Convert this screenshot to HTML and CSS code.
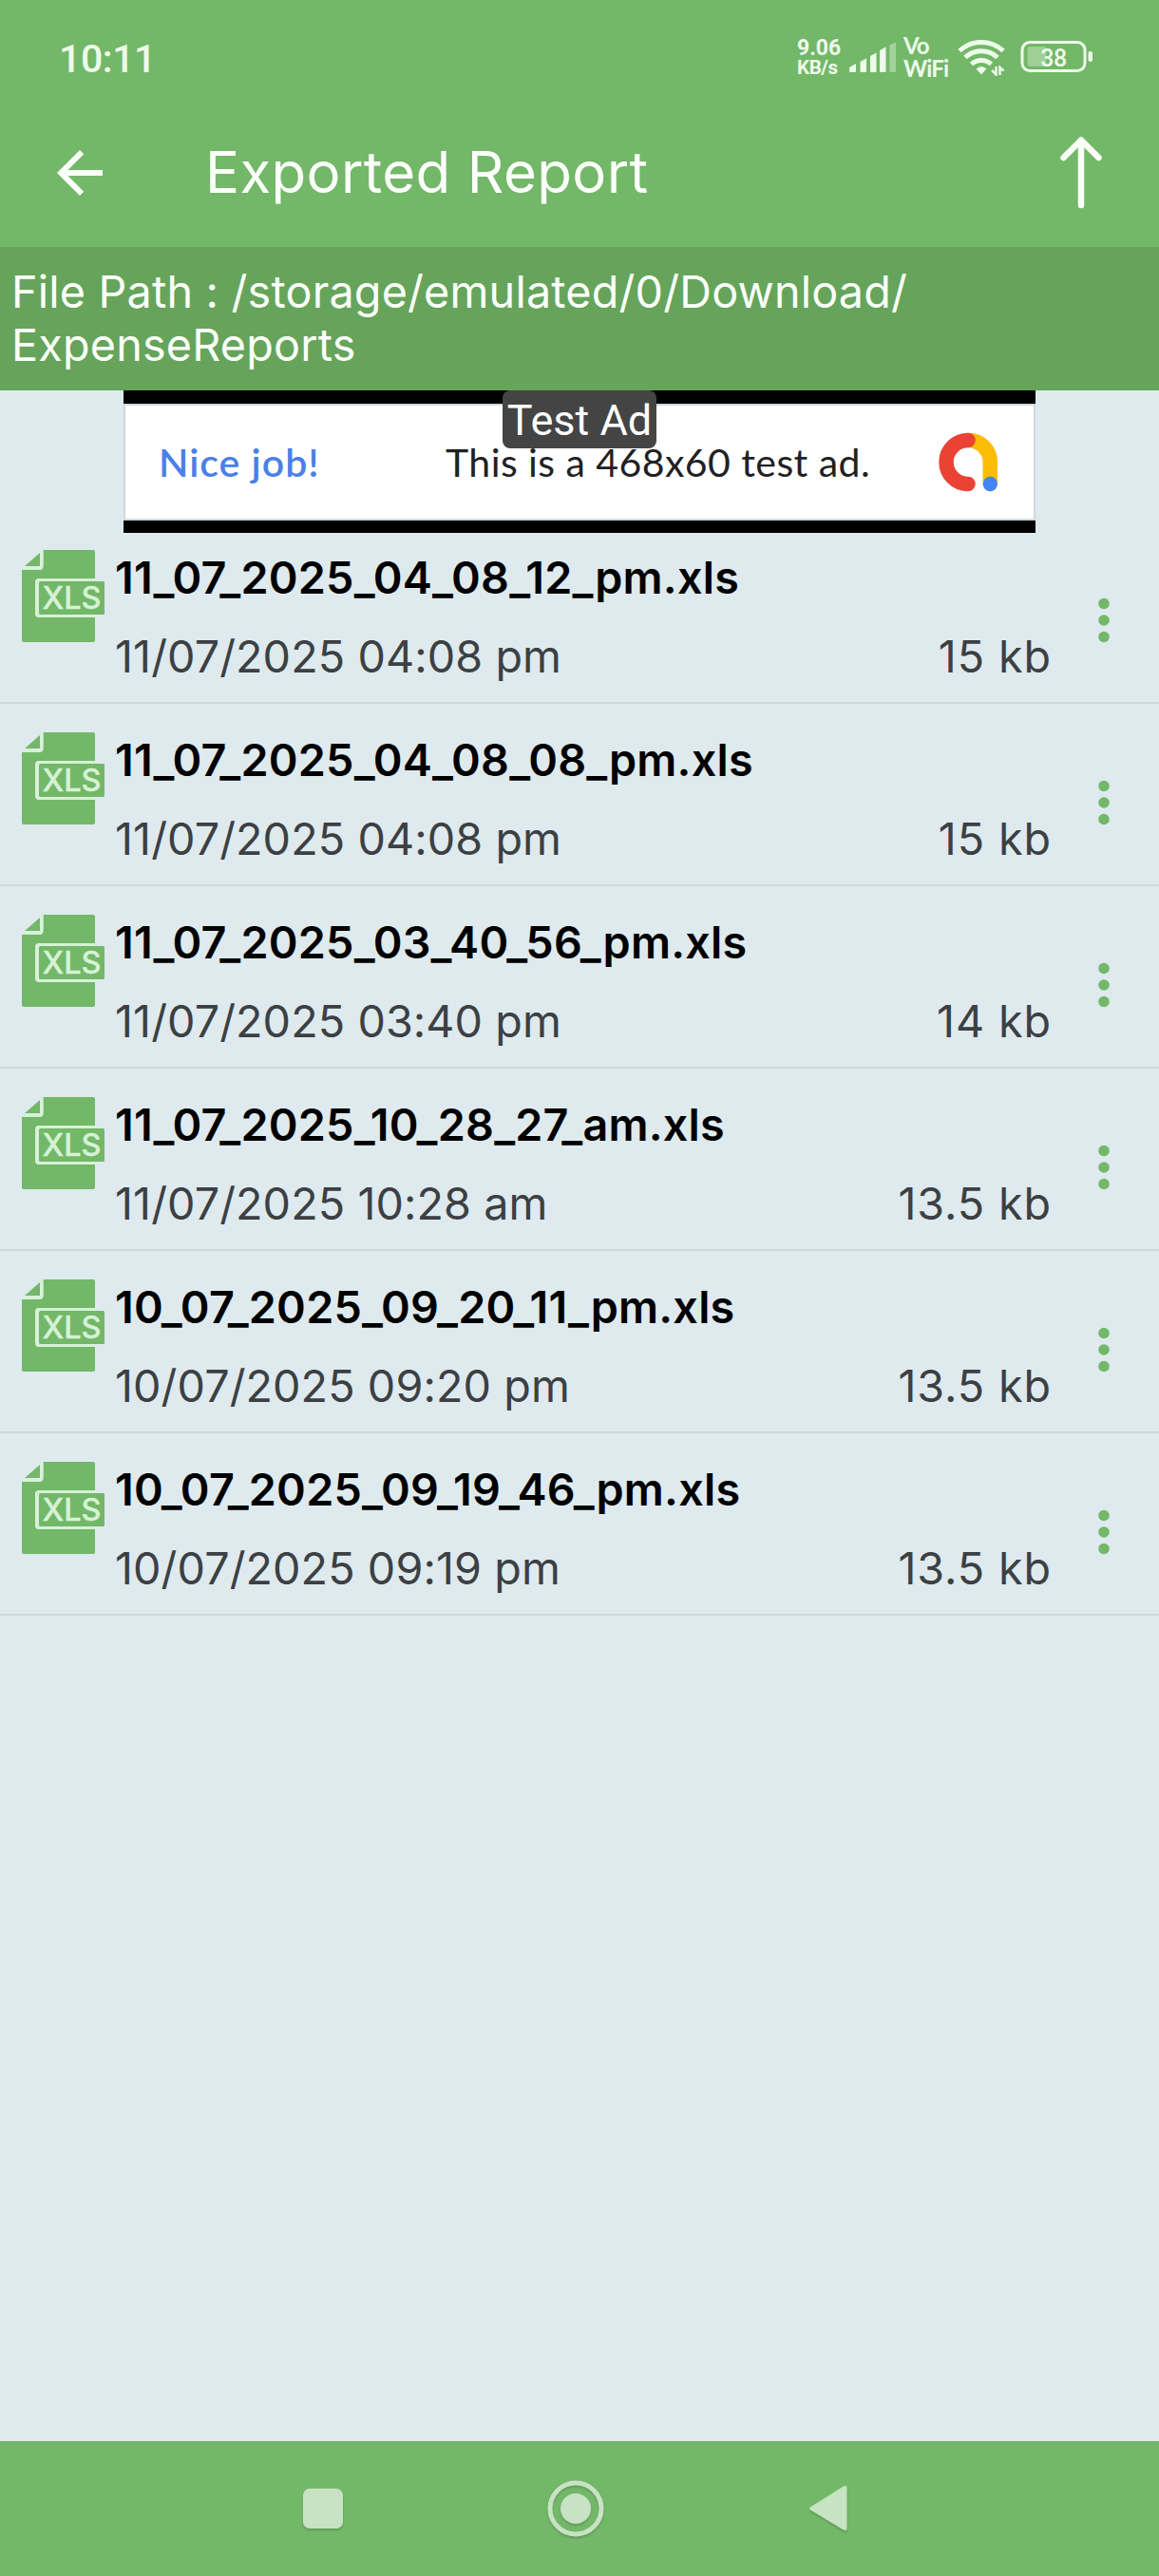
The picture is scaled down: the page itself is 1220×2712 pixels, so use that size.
FILE: index.html
```html
<!DOCTYPE html>
<html lang="en">
<head>
<meta charset="utf-8">
<title>Exported Report</title>
<link rel="stylesheet" href="styles.css">
</head>
<body>
<svg class="defs" width="0" height="0">
  <symbol id="xls" viewBox="0 0 88 98">
    <path d="M24 0H75Q77 0 77 2V30H18Q14 30 14 34V67Q14 71 18 71H77V95Q77 97 75 97H2Q0 97 0 95V21H18Q22.500 21 22.500 17V0ZM3 17 19 3V17Z" fill="#73b769"/>
    <rect x="18" y="33" width="69" height="35" rx="1.500" fill="#73b769"/>
    <path d="M77 31.500H19Q15.500 31.500 15.500 35V66Q15.500 69.500 19 69.500H77M1 19.500H18Q21 19.500 21 16.500V0" fill="none" stroke="#d6f2d5" stroke-width="3"/>
    <text x="21.500" y="62" textLength="62" lengthAdjust="spacingAndGlyphs" class="xls-text">XLS</text>
  </symbol>
  <symbol id="dots" viewBox="0 0 12 48">
    <g fill="#73b769"><circle cx="6" cy="6.500" r="5.800"/><circle cx="6" cy="24" r="5.800"/><circle cx="6" cy="41.500" r="5.800"/></g>
  </symbol>
</svg>
<div class="screen">
  <header class="status">
    <span class="clock">10:11</span>
    <span class="speed"><span>9.06</span><span class="unit">KB/s</span></span>
    <svg class="signal" width="50" height="34" viewBox="0 0 50 34" fill="#edfbe9">
      <path d="M0 27 7 23V31Q7 32 6 32H1.500Q0 32 0 30.500ZM11.500 21 18 17.500V31Q18 32 17 32H12.500Q11.500 32 11.500 31ZM22 15 28.500 11.500V31Q28.500 32 27.500 32H23Q22 32 22 31ZM32 9 38.500 5.500V31Q38.500 32 37.500 32H33Q32 32 32 31Z"/>
      <path opacity=".4" d="M42.500 3.500 49 .5V31Q49 32 48 32H43.500Q42.500 32 42.500 31Z"/>
    </svg>
    <span class="vowifi"><span>Vo</span><span>WiFi</span></span>
    <svg class="wifi" width="52" height="40" viewBox="0 0 52 40" fill="none" stroke="#edfbe9" stroke-width="5">
      <path d="M3 13.500A34 34 0 0 1 49 13.500M9 20.500A25 25 0 0 1 43 20.500M15.500 27.500A15.500 15.500 0 0 1 36.500 27.500"/>
      <path d="M20.500 32.500Q26 27.500 31.500 32.500L26 38.500Z" fill="#edfbe9" stroke="none"/>
      <path d="M41.500 30V38.500L37 34M45.500 39V31L49.500 34.500" stroke-width="2.500"/>
    </svg>
    <svg class="battery" width="78" height="36" viewBox="0 0 78 36">
      <rect x="4" y="2.500" width="66" height="30" rx="8" fill="none" stroke="#edfbe9" stroke-width="3"/>
      <rect x="9.500" y="7" width="20" height="21" rx="3" fill="#edfbe9" opacity=".35"/>
      <rect x="73.500" y="12" width="4.500" height="11" rx="2" fill="#edfbe9"/>
      <text x="23.200" y="28" textLength="28" class="battery-text">38</text>
    </svg>
  </header>
  <div class="appbar">
    <svg class="back" width="72" height="72" viewBox="0 0 24 24" fill="#fbfff9"><path d="M20 11H7.830l5.590-5.590L12 4l-8 8 8 8 1.410-1.410L7.830 13H20v-2z"/></svg>
    <h1>Exported Report</h1>
    <svg class="up" width="44" height="76" viewBox="0 0 44 76" fill="none" stroke="#fbfff9" stroke-width="6.500" stroke-linecap="round" stroke-linejoin="round"><path d="M22 72V4.500M3.500 22 22 3.500 40.500 22"/></svg>
  </div>
  <div class="path">File Path : /storage/emulated/0/Download/<br>ExpenseReports</div>
  <div class="ad">
    <div class="ad-body">
      <span class="nice">Nice job!</span>
      <span class="adtext">This is a 468x60 test ad.</span>
      <svg class="admob" width="64" height="64" viewBox="0 0 64 64" fill="none" stroke-width="15.500" stroke-linecap="round">
        <path d="M31 8.500A23 23 0 0 1 54.300 32V53" stroke="#fbbc04"/>
        <path d="M31 8.500A23 23 0 0 0 31 54.500" stroke="#ea4335"/>
        <circle cx="54.300" cy="54.500" r="7.700" fill="#4285f4"/>
      </svg>
    </div>
    <span class="badge">Test Ad</span>
  </div>
  <ul class="files">
    <li><svg class="icon"><use href="#xls"/></svg><div class="info"><b>11_07_2025_04_08_12_pm.xls</b><div class="meta"><span>11/07/2025 04:08 pm</span><span class="size">15 kb</span></div></div><svg class="more"><use href="#dots"/></svg></li>
    <li><svg class="icon"><use href="#xls"/></svg><div class="info"><b>11_07_2025_04_08_08_pm.xls</b><div class="meta"><span>11/07/2025 04:08 pm</span><span class="size">15 kb</span></div></div><svg class="more"><use href="#dots"/></svg></li>
    <li><svg class="icon"><use href="#xls"/></svg><div class="info"><b>11_07_2025_03_40_56_pm.xls</b><div class="meta"><span>11/07/2025 03:40 pm</span><span class="size">14 kb</span></div></div><svg class="more"><use href="#dots"/></svg></li>
    <li><svg class="icon"><use href="#xls"/></svg><div class="info"><b>11_07_2025_10_28_27_am.xls</b><div class="meta"><span>11/07/2025 10:28 am</span><span class="size">13.5 kb</span></div></div><svg class="more"><use href="#dots"/></svg></li>
    <li><svg class="icon"><use href="#xls"/></svg><div class="info"><b>10_07_2025_09_20_11_pm.xls</b><div class="meta"><span>10/07/2025 09:20 pm</span><span class="size">13.5 kb</span></div></div><svg class="more"><use href="#dots"/></svg></li>
    <li><svg class="icon"><use href="#xls"/></svg><div class="info"><b>10_07_2025_09_19_46_pm.xls</b><div class="meta"><span>10/07/2025 09:19 pm</span><span class="size">13.5 kb</span></div></div><svg class="more"><use href="#dots"/></svg></li>
  </ul>
  <nav class="nav">
    <svg width="44" height="46" viewBox="0 0 44 46"><rect x="1" y="1" width="42" height="42" rx="7"/></svg>
    <svg width="60" height="62" viewBox="0 0 60 62"><circle cx="30" cy="30" r="27" fill="none" stroke="#c8e2c4" stroke-width="5"/><circle cx="30" cy="30" r="16"/></svg>
    <svg width="42" height="52" viewBox="0 0 42 52"><path d="M2 23.500 37 1.500Q40.500 0 40.500 3V46Q40.500 49 37 47.500L2 26.500Q0 25 2 23.500Z"/></svg>
  </nav>
</div>
</body>
</html>
```
FILE: styles.css
```css
* { box-sizing: border-box; }
body { margin: 0; font-family: Inter, "Liberation Sans", sans-serif; }
.defs { position: absolute; }
.screen { width: 1220px; height: 2712px; display: flex; flex-direction: column; background: #deeaee; overflow: hidden; }
svg { display: block; flex: none; }

.status { height: 120px; flex: none; display: flex; align-items: flex-start; padding: 38px 70px 0 62px; background: #73b769; color: #edfbe9; font-family: Roboto, sans-serif; }
.clock { font-size: 41px; line-height: 48px; font-weight: 500; letter-spacing: -.4px; flex: 1; }
.speed { display: flex; flex-direction: column; font-size: 23px; font-weight: 700; line-height: 20px; width: 55px; padding-top: 3px; }
.speed .unit { font-size: 20.500px; letter-spacing: -.4px; }
.signal { margin-top: 6px; width: 50px; margin-right: 7px; }
.vowifi { display: flex; flex-direction: column; width: 56px; margin-top: -2px; font: 700 24px/24px Lato, sans-serif; letter-spacing: -.9px; }
.wifi { margin-top: 2px; margin-right: 13px; }
.battery { margin-top: 4px; }
.battery-text { font: 500 25px Roboto, sans-serif; fill: #edfbe9; }

.appbar { height: 140px; flex: none; display: flex; align-items: flex-start; padding: 0 60px 0 48px; background: #73b769; color: #fbfff9; }
.back { margin-top: 26px; }
.appbar h1 { flex: 1; margin: 25px 0 0 96px; font-size: 60px; line-height: 73px; font-weight: 400; letter-spacing: .35px; }
.up { margin-top: 24px; }

.path { height: 151px; flex: none; padding: 19px 12px; background: #66a45b; color: #fbfff9; font-size: 46.700px; line-height: 56px; letter-spacing: .2px; white-space: nowrap; }

.ad { position: relative; width: 960px; height: 150px; flex: none; margin: 0 auto; padding: 14px 0 13px; background: #000; font-family: Lato, sans-serif; }
.ad-body { height: 123px; border: 2px solid #cfd8dc; background: #fff; display: flex; align-items: center; padding: 0 36px 0 35px; font-size: 41px; letter-spacing: .45px; color: #202124; }
.nice { width: 302px; font-weight: 600; letter-spacing: 1px; color: #4a80e8; }
.adtext { flex: 1; }
.badge { position: absolute; left: 399px; top: 0; width: 162px; height: 61px; border-radius: 8px; background: #444; color: #fff; text-align: center; font: 45px/63px Roboto, sans-serif; }

.files { list-style: none; margin: -12px 0 0; padding: 0; flex: none; }
.files li { height: 192px; display: flex; align-items: flex-start; padding: 30px 52px 0 23px; border-bottom: 2px solid #cfd8d9; }
.icon { width: 88px; height: 98px; }
.xls-text { font: 500 32px Inter, sans-serif; fill: #d6f2d5; stroke: #d6f2d5; stroke-width: .4px; }
.info { flex: 1; margin-left: 10px; padding-top: 1px; font-size: 46.700px; line-height: 56px; }
.info b { display: block; font-weight: 600; letter-spacing: .22px; color: #000; }
.meta { display: flex; justify-content: space-between; margin-top: 27px; letter-spacing: .08px; color: #3c4043; }
.size { letter-spacing: .9px; }
.more { width: 12px; height: 48px; margin: 50px 0 0 49px; }

.nav { margin-top: auto; height: 142px; flex: none; display: flex; align-items: flex-start; padding-left: 318px; background: #73b769; }
.nav svg { fill: #c8e2c4; filter: drop-shadow(0 2px 1px rgba(0, 0, 0, .15)); }
.nav svg:nth-child(1) { margin-top: 49px; }
.nav svg:nth-child(2) { margin: 41px 0 0 214px; }
.nav svg:nth-child(3) { margin: 46px 0 0 215px; }
```
